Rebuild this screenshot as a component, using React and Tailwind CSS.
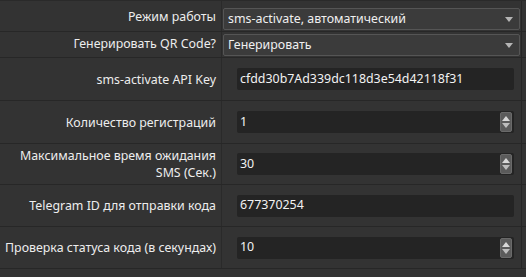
const rows = [
  { label: ["sms-activate API Key"], value: "cfdd30b7Ad339dc118d3e54d42118f31", h: "h-[43px]", spin: false },
  { label: ["Количество регистраций"], value: "1", h: "h-[43px]", spin: true },
  { label: ["Максимальное время ожидания", "SMS (Сек.)"], value: "30", h: "h-[41px]", spin: true },
  { label: ["Telegram ID для отправки кода"], value: "677370254", h: "h-[42px]", spin: false },
  { label: ["Проверка статуса кода (в секундах)"], value: "10", h: "h-[42px]", spin: true },
];

const SpinButtons = () => (
  <div className="w-[12px] h-[20px] rounded-[2px] bg-[#5b5b5b] border border-[#6a6a6a] flex flex-col items-center justify-center gap-[2px]">
    <svg width="8" height="5" viewBox="0 0 8 5">
      <path d="M4 0 L8 5 L0 5 Z" fill="#d8d8d8" />
    </svg>
    <svg width="8" height="5" viewBox="0 0 8 5">
      <path d="M0 0 L8 0 L4 5 Z" fill="#bdbdbd" />
    </svg>
  </div>
);

const SelectBox = ({ value }) => (
  <div className="w-[297px] h-[22px] rounded-[2px] border border-[#555555] bg-[#3b3b3b] flex items-center justify-between pl-[4px] pr-[6px] text-[#f0f0f0]">
    <span>{value}</span>
    <svg width="8" height="5" viewBox="0 0 8 5">
      <path d="M0 0 L8 0 L4 5 Z" fill="#b5b5b5" />
    </svg>
  </div>
);

const App = () => {
  return (
    <div
      className="w-[526px] h-[277px] bg-[#333333] text-[12.4px] text-[#ededed] overflow-hidden border-t border-[#2a2a2a]"
      style={{ fontFamily: '"Noto Sans", "DejaVu Sans", sans-serif' }}
    >
      {/* SELECT ROWS */}

      <div className="flex h-[31px] border-b border-[#272727]">
        <div className="w-[222px] shrink-0 flex items-end justify-end pr-[5px] pb-[4px] border-r border-[#2a2a2a]">
          Режим работы
        </div>
        <div className="w-[299px] pl-[1px] pt-[7px]">
          <SelectBox value="sms-activate, автоматический" />
        </div>
        <div className="flex-1 border-l border-[#262626]" />
      </div>

      <div className="flex h-[26px] border-b border-[#272727]">
        <div className="w-[222px] shrink-0 flex items-center justify-end pr-[5px] border-r border-[#2a2a2a]">
          Генерировать QR Code?
        </div>
        <div className="w-[299px] pl-[1px] pt-[2px]">
          <SelectBox value="Генерировать" />
        </div>
        <div className="flex-1 border-l border-[#262626]" />
      </div>

      {/* INPUT ROWS */}

      {rows.map((row) => (
        <div key={row.value} className={`flex ${row.h} border-b border-[#272727]`}>
          <div className="w-[222px] shrink-0 flex flex-col items-end justify-center text-right leading-[17px] whitespace-nowrap pr-[5px] border-r border-[#2a2a2a]">
            {row.label.map((line) => (
              <span key={line}>{line}</span>
            ))}
          </div>
          <div className="w-[299px] flex items-center pl-[15px] pr-[7px]">
            <div className="w-full h-[22px] bg-[#242424] rounded-[2px] flex items-center justify-between pl-[3px] pr-[2px] text-[#f2f2f2]">
              <span>{row.value}</span>
              {row.spin && <SpinButtons />}
            </div>
          </div>
          <div className="flex-1 border-l border-[#262626]" />
        </div>
      ))}
    </div>
  );
};

export default App;
